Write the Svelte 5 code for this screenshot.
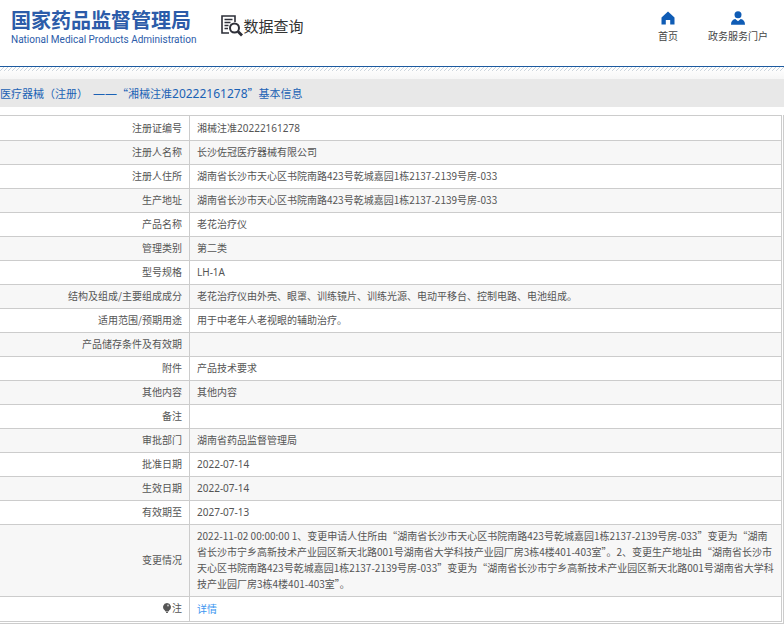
<script>
  const rows = [
    { label: '注册证编号', value: '湘械注准20222161278', code: true },
    { label: '注册人名称', value: '长沙佐冠医疗器械有限公司' },
    { label: '注册人住所', value: '湖南省长沙市天心区书院南路423号乾城嘉园1栋2137-2139号房-033' },
    { label: '生产地址', value: '湖南省长沙市天心区书院南路423号乾城嘉园1栋2137-2139号房-033' },
    { label: '产品名称', value: '老花治疗仪' },
    { label: '管理类别', value: '第二类' },
    { label: '型号规格', value: 'LH-1A', code: true },
    { label: '结构及组成/主要组成成分', value: '老花治疗仪由外壳、眼罩、训练镜片、训练光源、电动平移台、控制电路、电池组成。' },
    { label: '适用范围/预期用途', value: '用于中老年人老视眼的辅助治疗。' },
    { label: '产品储存条件及有效期', value: '' },
    { label: '附件', value: '产品技术要求' },
    { label: '其他内容', value: '其他内容' },
    { label: '备注', value: '' },
    { label: '审批部门', value: '湖南省药品监督管理局' },
    { label: '批准日期', value: '2022-07-14', code: true },
    { label: '生效日期', value: '2022-07-14', code: true },
    { label: '有效期至', value: '2027-07-13', code: true },
    { label: '变更情况', value: '2022-11-02 00:00:00 1、变更申请人住所由“湖南省长沙市天心区书院南路423号乾城嘉园1栋2137-2139号房-033”变更为“湖南省长沙市宁乡高新技术产业园区新天北路001号湖南省大学科技产业园厂房3栋4楼401-403室”。2、变更生产地址由“湖南省长沙市天心区书院南路423号乾城嘉园1栋2137-2139号房-033”变更为“湖南省长沙市宁乡高新技术产业园区新天北路001号湖南省大学科技产业园厂房3栋4楼401-403室”。' }
  ];
</script>

<header>
  <a class="logo" href="#home">
    <span class="logo-cn">国家药品监督管理局</span>
    <span class="logo-en">National Medical Products Administration</span>
  </a>
  <div class="search-title">
    <svg width="22" height="22" viewBox="0 0 22 22" fill="none" stroke="#2d2f38" aria-hidden="true">
      <path d="M14 7V1H1v17h7" stroke-width="1.6" />
      <path d="M3.5 4.5h8M3.5 7.5h6M3.5 10.5h4M3.5 13.5h3.5" stroke-width="1.3" />
      <circle cx="13.5" cy="13" r="4.5" stroke-width="2" />
      <path d="M17 16.5l4 4" stroke-width="2.8" />
    </svg>
    <h1>数据查询</h1>
  </div>
  <nav>
    <a href="#index">
      <svg width="14" height="14" viewBox="0 0 14 14" aria-hidden="true">
        <path d="M7 0.5L13.5 6.5V13.5H9.2V9H4.8v4.5H0.5V6.5z" fill="#0f5cb5" />
      </svg>
      <span>首页</span>
    </a>
    <a href="#portal">
      <svg width="14" height="14" viewBox="0 0 14 14" aria-hidden="true">
        <circle cx="7" cy="3.7" r="3.5" fill="#0f5cb5" />
        <path d="M0 13.7c0-3.6 1.8-5.2 4.3-5.7L7 10.3 9.7 8c2.5 0.5 4.3 2.1 4.3 5.7z" fill="#0f5cb5" />
      </svg>
      <span>政务服务门户</span>
    </a>
  </nav>
</header>
<div class="hatch"></div>
<h2>
  <span>医疗器械（注册）</span>
  <span><span class="latin">——</span>“湘械注准<span class="latin">20222161278</span>”基本信息</span>
</h2>

<div class="frame">
  <table>
    <tbody>
      {#each rows as row}
        <tr>
          <th scope="row">{row.label}</th>
          <td class:code={row.code}>{row.value}</td>
        </tr>
      {/each}
      <tr>
        <th scope="row">
          <span class="note">
            <svg width="8" height="10" viewBox="0 0 8 10" aria-hidden="true">
              <path d="M4 0a4 4 0 0 1 2.3 7.2L5.5 8.5h-3L1.7 7.2A4 4 0 0 1 4 0z" fill="#555" />
              <path d="M3 9.4h2" stroke="#555" />
              <circle cx="5" cy="2.5" r="0.9" fill="#ccc" />
            </svg>注
          </span>
        </th>
        <td><a href="#detail">详情</a></td>
      </tr>
    </tbody>
  </table>
</div>

<style>
  :global(body) {
    margin: 0;
    background: #fff;
    color: #555;
    font: 10px/16px "Noto Sans CJK SC", sans-serif;
  }
  a {
    text-decoration: none;
  }
  header {
    display: flex;
    align-items: flex-start;
    height: 66px;
    border-bottom: 1px solid #1c5a9f;
  }
  .logo {
    display: flex;
    flex-direction: column;
    margin: 8px 0 0 11px;
    color: #2c5ca9;
  }
  .logo-cn {
    font-size: 20px;
    font-weight: 700;
    line-height: 24px;
  }
  .logo-en {
    font-family: Roboto, sans-serif;
    font-size: 10px;
    line-height: 16px;
  }
  .search-title {
    display: flex;
    align-items: center;
    margin: 14px 0 0 25px;
  }
  h1 {
    margin: 0;
    color: #333;
    font-size: 15px;
    font-weight: 400;
    line-height: 24px;
  }
  nav {
    display: flex;
    gap: 30px;
    margin: 11px 16px 0 auto;
  }
  nav a {
    display: flex;
    flex-direction: column;
    align-items: center;
    gap: 3px;
    color: #444;
  }
  .hatch {
    height: 12px;
    background:
      linear-gradient(135deg, transparent 38%, #ccd4dc 38% 62%, transparent 62%) 0 0 / 4px 4px repeat-x,
      linear-gradient(#fff, #f6f6f6);
  }
  h2 {
    display: flex;
    gap: 5px;
    margin: 0 0 8px;
    background: #e8e8e8;
    color: #1b62b5;
    font-size: 11px;
    font-weight: 400;
    line-height: 28px;
  }
  .latin {
    font-family: "Noto Sans", sans-serif;
    font-size: 12px;
    line-height: 16px;
  }
  .frame {
    padding: 0 1px 1px 0;
    border: solid #ccc;
    border-width: 0 1px 1px 0;
  }
  table {
    width: 100%;
    border-collapse: separate;
    border-spacing: 0;
    border: solid #ccc;
    border-width: 1px 1px 0 0;
  }
  th,
  td {
    height: 16px;
    padding: 3px 7px 4px;
    border-bottom: 1px solid #ccc;
    font-weight: 400;
    text-align: left;
  }
  td {
    padding-right: 4px;
  }
  .code {
    font-family: "Noto Sans", "Noto Sans CJK SC", sans-serif;
  }
  th {
    width: 175px;
    border-right: 1px solid #ccc;
    text-align: right;
  }
  tr:first-child > *,
  tr:last-child > * {
    height: 17px;
  }
  tr:nth-child(even) {
    background: #f7f7f7;
  }
  .note {
    display: inline-flex;
    align-items: center;
    gap: 1px;
  }
  td a {
    color: #3c96f0;
  }
</style>
